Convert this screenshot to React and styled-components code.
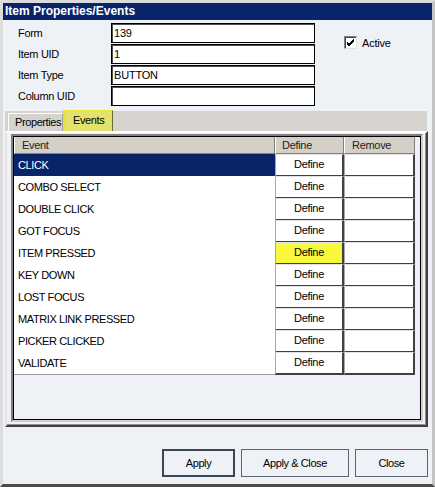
import React from 'react';
import styled, { createGlobalStyle } from 'styled-components';

const Global = createGlobalStyle`
  html, body { margin: 0; padding: 0; background: #eef2f6; }
  body { font-family: "Liberation Sans", Arial, sans-serif; font-size: 11px; color: #000; }
`;

const Window = styled.div`
  width: 435px;
  height: 487px;
  box-sizing: border-box;
  background: #eef2f6;
  border-style: solid;
  border-width: 3px 3px 3px 3px;
  border-color: #dcdcdc #c4c4c4 #4a4a4a #dcdcdc;
  display: flex;
  flex-direction: column;
`;

const TitleBar = styled.div`
  height: 17px;
  background: #0a246a;
  color: #fff;
  font-weight: bold;
  font-size: 12px;
  line-height: 17px;
  padding-left: 2px;
`;

const FormArea = styled.div`
  display: flex;
  align-items: flex-start;
  padding: 3px 0 0 15px;
`;

const Fields = styled.div`
  display: flex;
  flex-direction: column;
  gap: 1px;
`;

const FieldRow = styled.div`
  display: flex;
  align-items: center;
  height: 20px;
`;

const Label = styled.span`
  width: 93px;
  letter-spacing: -0.3px;
`;

const Field = styled.div`
  width: 204px;
  height: 20px;
  box-sizing: border-box;
  border: 1px solid #000;
  box-shadow: inset 1px 1px 0 #505050;
  background: #fff;
  padding-left: 2px;
  line-height: 18px;
  letter-spacing: -0.2px;
`;

const CheckWrap = styled.label`
  display: flex;
  align-items: center;
  gap: 5px;
  margin: 13px 0 0 29px;
  letter-spacing: -0.2px;
`;

const CheckBox = styled.span`
  width: 13px;
  height: 13px;
  box-sizing: border-box;
  background: #fff;
  border-style: solid;
  border-width: 1px;
  border-color: #808080 #e0e0e0 #e0e0e0 #808080;
  box-shadow: inset 1px 1px 0 #404040;
  display: flex;
  align-items: center;
  justify-content: center;
`;

const TabStrip = styled.div`
  margin: 5px 0 0 2px;
  width: 422px;
  height: 20px;
  background: #d6d3ce;
  display: flex;
  align-items: flex-end;
  padding-left: 3px;
  box-sizing: border-box;
`;

const Tab = styled.div`
  box-sizing: border-box;
  height: ${p => (p.$active ? 21 : 18)}px;
  width: ${p => p.$w}px;
  padding-left: ${p => p.$pad}px;
  line-height: ${p => (p.$active ? 19 : 17)}px;
  letter-spacing: -0.4px;
  background: ${p => (p.$active ? '#e3e26c' : '#d6d3ce')};
  border-top: 1px solid ${p => (p.$active ? '#e8e83a' : '#fff')};
  border-left: ${p => (p.$active ? '2px solid #e2e238' : '1px solid #fff')};
  border-right: 1px solid ${p => (p.$active ? '#6a6a30' : '#a0a0a0')};
  margin-top: ${p => (p.$active ? -1 : 0)}px;
`;

const Panel = styled.div`
  margin-left: 2px;
  width: 423px;
  height: 296px;
  box-sizing: border-box;
  border-style: solid;
  border-width: 2px;
  border-color: #fff #404040 #404040 #e4e4e4;
  box-shadow: inset -1px -1px 0 #909090;
  padding: 1px 3px 3px 4px;
`;

const Frame = styled.div`
  border-style: solid;
  border-width: 2px;
  border-color: #808080 #d4d0c8 #d4d0c8 #808080;
`;

const Grid = styled.div`
  border: 1px solid #000;
  height: 282px;
  background: #eef2f6;
  display: flex;
  flex-direction: column;
`;

const cols = '261px 69px 71px 1fr';

const HeaderRow = styled.div`
  display: grid;
  grid-template-columns: ${cols};
  height: 17px;
`;

const HeaderCell = styled.div`
  box-sizing: border-box;
  background: ${p => (p.$blank ? 'transparent' : '#d4d0c8')};
  border-left: ${p => (p.$blank ? 'none' : '1px solid #fff')};
  border-right: ${p => (p.$blank ? 'none' : '1px solid #808080')};
  border-bottom: ${p => (p.$blank ? 'none' : '1px solid #808080')};
  padding-left: ${p => p.$pad || 0}px;
  line-height: 16px;
  color: #222;
  letter-spacing: -0.3px;
`;

const Row = styled.div`
  display: grid;
  grid-template-columns: ${cols};
  height: 22px;
`;

const EventCell = styled.div`
  box-sizing: border-box;
  background: ${p => (p.$selected ? '#0a246a' : '#fff')};
  color: ${p => (p.$selected ? '#fff' : '#000')};
  border-bottom: 1px solid #9c9c9c;
  padding-left: 4px;
  line-height: 22px;
  letter-spacing: -0.4px;
`;

const CellButton = styled.div`
  box-sizing: border-box;
  background: ${p => (p.$highlight ? '#f7f73c' : '#fff')};
  border-style: solid;
  border-width: 1px 2px 2px 1px;
  border-color: #e2e2e2 #404040 #404040 #a8a8a8;
  text-align: center;
  line-height: 19px;
  letter-spacing: -0.3px;
`;

const Footer = styled.div`
  display: flex;
  justify-content: flex-end;
  gap: 6px;
  margin-top: 22px;
  padding-right: 4px;
`;

const Button = styled.button`
  width: ${p => p.$w}px;
  height: 28px;
  box-sizing: border-box;
  background: #eef2f6;
  border: ${p => (p.$default ? '2px solid #3a4658' : '1px solid #5c6470')};
  font-family: "Liberation Sans", Arial, sans-serif;
  font-size: 11px;
  letter-spacing: -0.4px;
  color: #000;
  padding: 0;
`;

const events = [
  'CLICK',
  'COMBO SELECT',
  'DOUBLE CLICK',
  'GOT FOCUS',
  'ITEM PRESSED',
  'KEY DOWN',
  'LOST FOCUS',
  'MATRIX LINK PRESSED',
  'PICKER CLICKED',
  'VALIDATE',
];

const fields = [
  ['Form', '139'],
  ['Item UID', '1'],
  ['Item Type', 'BUTTON'],
  ['Column UID', ''],
];

export default function App() {
  return (
    <>
      <Global />
      <Window>
        <TitleBar>Item Properties/Events</TitleBar>
        <FormArea>
          <Fields>
            {fields.map(([l, v]) => (
              <FieldRow key={l}>
                <Label>{l}</Label>
                <Field>{v}</Field>
              </FieldRow>
            ))}
          </Fields>
          <CheckWrap>
            <CheckBox>
              <svg width="9" height="9" viewBox="0 0 9 9">
                <path d="M1 4 L3 6 L8 1 M1 5 L3 7 L8 2 M1 6 L3 8 L8 3" stroke="#000" strokeWidth="1" fill="none" />
              </svg>
            </CheckBox>
            Active
          </CheckWrap>
        </FormArea>
        <TabStrip>
          <Tab $w={55} $pad={6}>Properties</Tab>
          <Tab $w={50} $pad={8} $active>Events</Tab>
        </TabStrip>
        <Panel>
          <Frame>
            <Grid>
              <HeaderRow>
                <HeaderCell $pad={7}>Event</HeaderCell>
                <HeaderCell $pad={6}>Define</HeaderCell>
                <HeaderCell $pad={7}>Remove</HeaderCell>
                <HeaderCell $blank />
              </HeaderRow>
              {events.map((e, i) => (
                <Row key={e}>
                  <EventCell $selected={i === 0}>{e}</EventCell>
                  <CellButton $highlight={e === 'ITEM PRESSED'}>Define</CellButton>
                  <CellButton />
                  <span />
                </Row>
              ))}
            </Grid>
          </Frame>
        </Panel>
        <Footer>
          <Button $w={73} $default>Apply</Button>
          <Button $w={108}>Apply &amp; Close</Button>
          <Button $w={73}>Close</Button>
        </Footer>
      </Window>
    </>
  );
}
